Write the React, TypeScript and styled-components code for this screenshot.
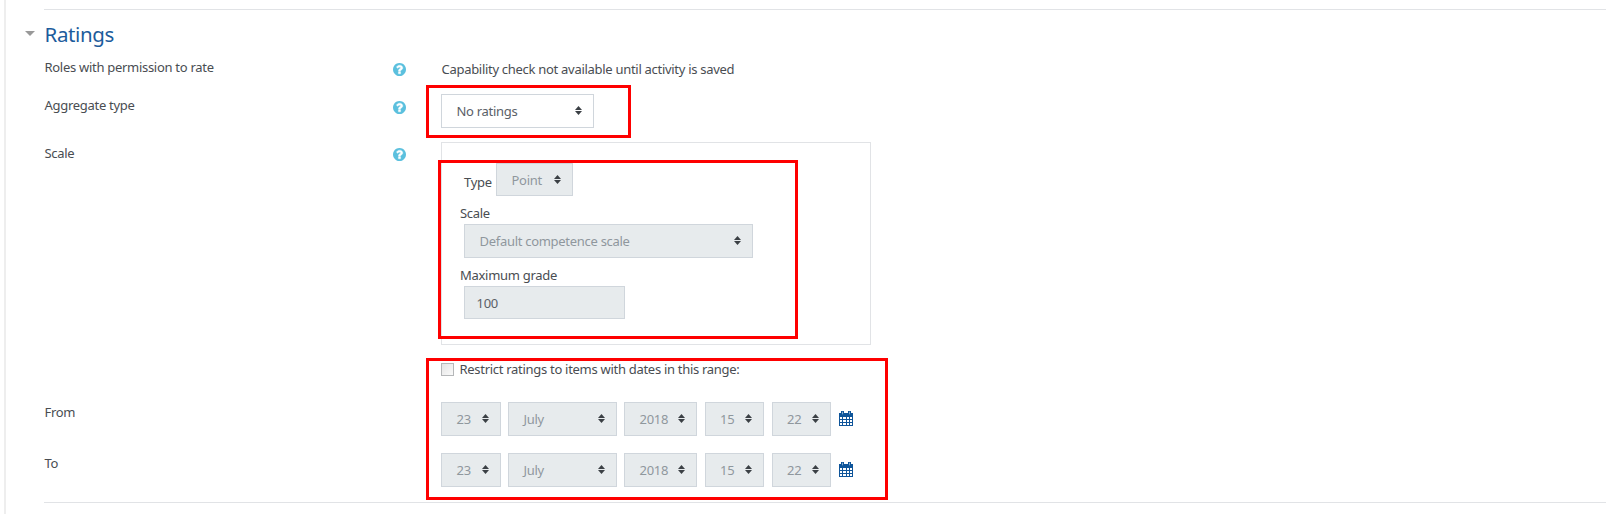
import React from "react";
import styled, { createGlobalStyle } from "styled-components";

const Global = createGlobalStyle`
  * { box-sizing: border-box; }
  body {
    margin: 0;
    background: #fff;
    color: #494d52;
    font: 13px/20px "Noto Sans", "Open Sans", sans-serif;
    letter-spacing: -0.29px;
    white-space: nowrap;
    overflow: hidden;
  }
`;

const Page = styled.main`
  height: 514px;
  margin-left: 4px;
  padding: 9px 8px 0 38px;
  border-left: 2px solid #eee;
`;

const Section = styled.section`
  height: 494px;
  border-top: 1px solid #e1e3e6;
  border-bottom: 1px solid #e1e3e6;
`;

const Heading = styled.h3`
  display: flex;
  align-items: center;
  gap: 9.5px;
  height: 48px;
  margin: 0 0 -1px -19px;
  color: #1c5c9c;
  font-size: 20.5px;
  font-weight: 400;
  letter-spacing: -0.35px;
`;

const Caret = styled.span`
  width: 10px;
  border: 5px solid transparent;
  border-top-color: #999;
  border-bottom: 0;
  margin-top: -2px;
`;

const Row = styled.div<{ $height: number }>`
  display: grid;
  grid-template-columns: 349px 48px 1fr;
  height: ${(p) => p.$height}px;
`;

const Label = styled.span<{ $drop?: number }>`
  padding: ${(p) => p.$drop ?? 0}px 0 0 0.5px;
`;

const HelpIcon = styled.svg<{ $drop: number }>`
  display: block;
  width: 13px;
  height: 13px;
  margin-top: ${(p) => p.$drop}px;
`;

const Content = styled.div`
  position: relative;
  justify-self: start;
`;

const StaticText = styled.div`
  padding: 2px 0 0 0.5px;
`;

const SelectBox = styled.div<{ $width: number; $disabled?: boolean; $height?: number }>`
  display: flex;
  flex: none;
  align-items: center;
  justify-content: space-between;
  width: ${(p) => p.$width}px;
  height: ${(p) => p.$height ?? 34}px;
  padding: 0 11px 0 14.5px;
  border: 1px solid #d0d6dc;
  background: ${(p) => (p.$disabled ? "#e7ebed" : "#fff")};
  color: ${(p) => (p.$disabled ? "#8f979d" : "#5a6067")};
`;

const SortArrows = styled.svg`
  width: 7px;
  height: 9px;
  margin-top: -1px;
  fill: #3b4045;
`;

const Fieldset = styled.div`
  width: 430px;
  height: 203px;
  padding: 20px 0 0 18px;
  border: 1px solid #e1e3e6;
`;

const TypeLine = styled.div`
  display: flex;
  gap: 4px;
  height: 40px;
  padding-left: 4px;
`;

const TypeLabel = styled.span`
  width: 28px;
  padding-top: 9px;
`;

const Field = styled.div<{ $height: number }>`
  height: ${(p) => p.$height}px;
`;

const FieldControl = styled.div`
  padding: 1px 0 0 4px;
`;

const GradeInput = styled.div`
  width: 161px;
  height: 33px;
  padding: 6px 11.5px;
  border: 1px solid #d0d6dc;
  background: #e7ebed;
  color: #5a6067;
`;

const CheckLine = styled.label`
  display: flex;
  align-items: center;
  gap: 5.5px;
  height: 20px;
  margin-top: 2px;
`;

const Checkbox = styled.span`
  width: 13px;
  height: 13px;
  border: 1px solid #b5b7b9;
  background: linear-gradient(135deg, #e4e4e4, #fafafa);
`;

const DateLine = styled.div`
  display: flex;
  align-items: flex-start;
  gap: 7.5px;
`;

const CalendarIcon = styled.svg`
  width: 14px;
  height: 15px;
  margin: 9px 0 0 0;
`;

const Highlight = styled.div<{ $x: number; $y: number; $w: number; $h: number }>`
  position: absolute;
  left: ${(p) => p.$x}px;
  top: ${(p) => p.$y}px;
  width: ${(p) => p.$w}px;
  height: ${(p) => p.$h}px;
  border: 3px solid #fe0000;
  pointer-events: none;
`;

const Help = ({ drop }: { drop: number }) => (
  <HelpIcon $drop={drop} viewBox="0 0 1536 1536">
    <path
      fill="#5bc0de"
      d="M1536 768q0 209-103 385.500t-279.500 279.500-385.500 103-385.500-103-279.500-279.500-103-385.500 103-385.500 279.500-279.500 385.500-103 385.500 103 279.500 279.500 103 385.500z"
    />
    <path
      fill="#fff"
      stroke="#fff"
      strokeWidth="50"
      d="M896 1248v-192q0-14-9-23t-23-9h-192q-14 0-23 9t-9 23v192q0 14 9 23t23 9h192q14 0 23-9t9-23zM1152 576q0-88-55.500-163t-138.500-116-170-41q-243 0-371 213-15 24 8 42l132 100q7 6 19 6 16 0 25-12 53-68 86-92 34-24 86-24 48 0 85.500 26t37.500 59q0 38-20 61t-68 45q-63 28-115.500 86.500t-52.500 125.500v36q0 14 9 23t23 9h192q14 0 23-9t9-23q0-19 21.500-49.500t54.500-49.500q32-18 49-28.500t46-35 44.500-48 28-60.500 12.500-81z"
    />
  </HelpIcon>
);

type SelectProps = { width: number; disabled?: boolean; height?: number; children: React.ReactNode };

const Select = ({ width, disabled, height, children }: SelectProps) => (
  <SelectBox $width={width} $disabled={disabled} $height={height}>
    {children}
    <SortArrows viewBox="0 0 7 9">
      <path d="M0 4 3.500 0 7 4ZM0 5h7L3.500 9Z" />
    </SortArrows>
  </SelectBox>
);

const dateParts = [
  { text: "23", width: 59.5 },
  { text: "July", width: 108.5 },
  { text: "2018", width: 73 },
  { text: "15", width: 59.5 },
  { text: "22", width: 59.5 },
];

const DateSelects = () => (
  <DateLine>
    {dateParts.map((part) => (
      <Select key={part.text} width={part.width} disabled>
        {part.text}
      </Select>
    ))}
    <CalendarIcon viewBox="0 0 14 15">
      <path fill="#0f559a" d="M0 2h14v13H0ZM2 0h3v3H2ZM9 0h3v3H9Z" />
      <path
        fill="#fff"
        d="M1 6h2v2H1zM4 6h3v2H4zM8 6h2v2H8zM11 6h2v2h-2zM1 9h2v2H1zM4 9h3v2H4zM8 9h2v2H8zM11 9h2v2h-2zM1 12h2v2H1zM4 12h3v2H4zM8 12h2v2H8zM11 12h2v2h-2z"
      />
      <path stroke="#bcd3e6" strokeWidth=".7" d="M3.500.7v2.600M10.500.7v2.600" />
    </CalendarIcon>
  </DateLine>
);

export default function App() {
  return (
    <>
      <Global />
      <Page>
        <Section>
          <Heading>
            <Caret />
            Ratings
          </Heading>
          <Row $height={37}>
            <Label>Roles with permission to rate</Label>
            <Help drop={6} />
            <Content>
              <StaticText>Capability check not available until activity is saved</StaticText>
            </Content>
          </Row>
          <Row $height={48}>
            <Label $drop={1}>Aggregate type</Label>
            <Help drop={7} />
            <Content>
              <Select width={153}>No ratings</Select>
              <Highlight $x={-15} $y={-9} $w={205} $h={53} />
            </Content>
          </Row>
          <Row $height={215}>
            <Label $drop={1}>Scale</Label>
            <Help drop={6} />
            <Content>
              <Fieldset>
                <TypeLine>
                  <TypeLabel>Type</TypeLabel>
                  <Select width={77} height={33} disabled>
                    Point
                  </Select>
                </TypeLine>
                <Field $height={62}>
                  Scale
                  <FieldControl>
                    <Select width={289} disabled>
                      Default competence scale
                    </Select>
                  </FieldControl>
                </Field>
                <Field $height={60}>
                  Maximum grade
                  <FieldControl>
                    <GradeInput>100</GradeInput>
                  </FieldControl>
                </Field>
              </Fieldset>
              <Highlight $x={-3} $y={18} $w={360} $h={179} />
            </Content>
          </Row>
          <Row $height={45}>
            <Label />
            <span />
            <Content>
              <CheckLine>
                <Checkbox />
                Restrict ratings to items with dates in this range:
              </CheckLine>
              <Highlight $x={-15} $y={1} $w={462} $h={142} />
            </Content>
          </Row>
          <Row $height={51}>
            <Label>From</Label>
            <span />
            <Content>
              <DateSelects />
            </Content>
          </Row>
          <Row $height={49}>
            <Label>To</Label>
            <span />
            <Content>
              <DateSelects />
            </Content>
          </Row>
        </Section>
      </Page>
    </>
  );
}
